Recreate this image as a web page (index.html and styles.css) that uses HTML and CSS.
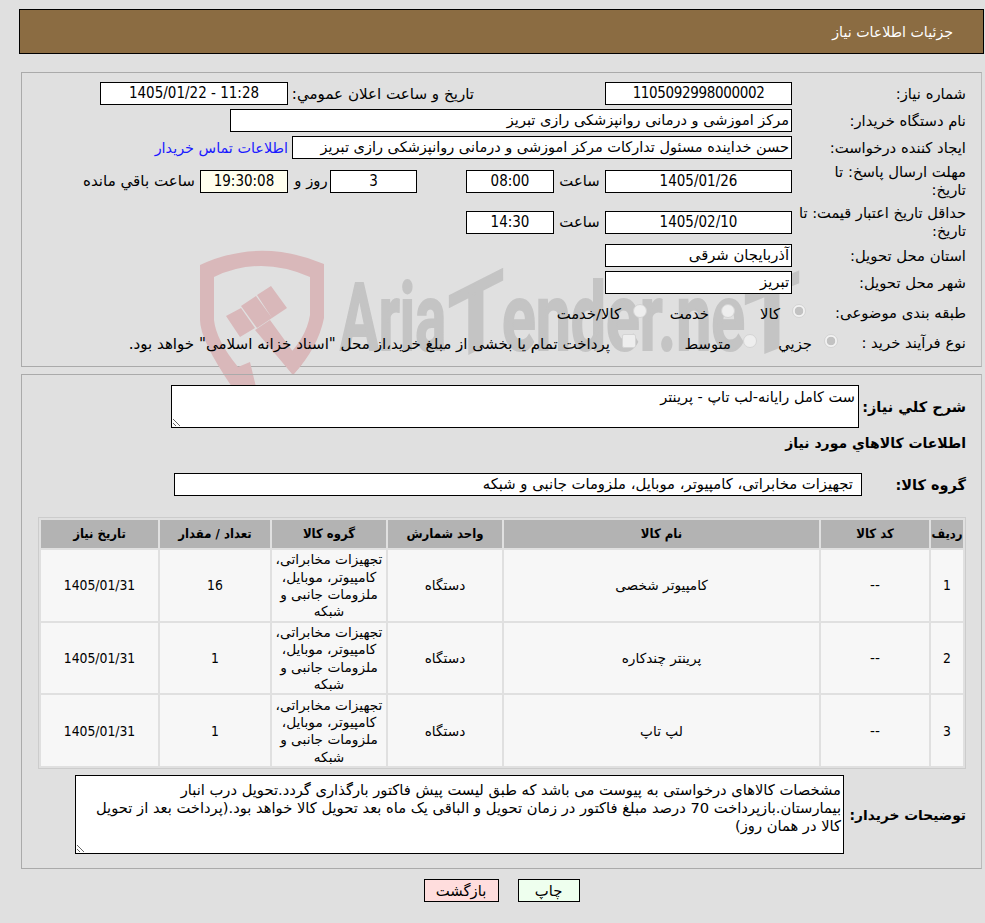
FILE: index.html
```html
<!DOCTYPE html>
<html lang="fa" dir="rtl">
<head>
<meta charset="utf-8">
<title>جزئیات اطلاعات نیاز</title>
<link rel="stylesheet" href="styles.css">
</head>
<body>
<header class="page-title"><h1>جزئیات اطلاعات نیاز</h1></header>

<section class="panel panel-info">
  <svg class="watermark" viewBox="0 0 630 145" aria-hidden="true">
    <path class="wm-shield" d="M10 25 Q70 -3 134 24 L134 78 Q128 108 103 135 L92 121 Q116 100 120 75 L120 37 Q70 15 24 37 L24 80 Q26 100 48 127 L60 122 L66 147 L42 147 Q10 100 10 80 Z"/>
    <path class="wm-shield" d="M36 76 L51 68 L65 88 L50 97 Z M51 66 L66 56 L82 78 L67 88 Z M67 55 L81 46 L97 68 L82 78 Z M65 90 L80 80 L112 124 L103 135 Z"/>
    <text class="wm-text" x="150" y="110" textLength="106" lengthAdjust="spacingAndGlyphs">Aria</text>
    <text class="wm-text wm-t1" x="258" y="110" textLength="56" lengthAdjust="spacingAndGlyphs">T</text>
    <text class="wm-text" x="312" y="110" textLength="243" lengthAdjust="spacingAndGlyphs">ender.ne</text>
    <text class="wm-text wm-t2" x="554" y="110" textLength="56" lengthAdjust="spacingAndGlyphs">T</text>
  </svg>

  <div class="row row-std">
    <label class="lbl">شماره نیاز:</label>
    <div class="fld w-187 center num tight">1105092998000002</div>
    <span class="txt wide pub">تاریخ و ساعت اعلان عمومي:</span>
    <div class="fld w-188 center num ltr ms-5">1405/01/22 - 11:28</div>
  </div>
  <div class="row row-std">
    <label class="lbl">نام دستگاه خریدار:</label>
    <div class="fld w-562">مرکز اموزشی و درمانی روانپزشکی رازی تبریز</div>
  </div>
  <div class="row row-std">
    <label class="lbl">ایجاد کننده درخواست:</label>
    <div class="fld w-500">حسن خداینده مسئول تدارکات مرکز اموزشی و درمانی روانپزشکی رازی تبریز</div>
    <a class="contact" href="#">اطلاعات تماس خریدار</a>
  </div>
  <div class="row row-tall">
    <label class="lbl">مهلت ارسال پاسخ: تا تاریخ:</label>
    <div class="fld w-187 center num">1405/01/26</div>
    <span class="txt hour">ساعت</span>
    <div class="fld w-88 center num">08:00</div>
    <div class="fld w-87 center num ms-49">3</div>
    <span class="txt day">روز و</span>
    <div class="fld w-88 center num timer">19:30:08</div>
    <span class="txt wide ms-5">ساعت باقي مانده</span>
  </div>
  <div class="row row-tall">
    <label class="lbl lbl-long">حداقل تاریخ اعتبار قیمت: تا تاریخ:</label>
    <div class="fld w-187 center num">1405/02/10</div>
    <span class="txt hour">ساعت</span>
    <div class="fld w-88 center num">14:30</div>
  </div>
  <div class="row row-std">
    <label class="lbl">استان محل تحویل:</label>
    <div class="fld w-187 fld-wide">آذربایجان شرقی</div>
  </div>
  <div class="row row-std">
    <label class="lbl">شهر محل تحویل:</label>
    <div class="fld w-187 fld-wide">تبریز</div>
  </div>
  <div class="row row-radio">
    <label class="lbl lbl-cat">طبقه بندی موضوعی:</label>
    <input class="radio" type="radio" name="cat" checked disabled>
    <span class="txt opt opt-45">کالا</span>
    <input class="radio" type="radio" name="cat" disabled>
    <span class="txt opt opt-63">خدمت</span>
    <input class="radio" type="radio" name="cat" disabled>
    <span class="txt opt">کالا/خدمت</span>
  </div>
  <div class="row row-radio">
    <label class="lbl lbl-type">نوع فرآیند خرید :</label>
    <input class="radio" type="radio" name="type" checked disabled>
    <span class="txt opt opt-55">جزیي</span>
    <input class="radio" type="radio" name="type" disabled>
    <span class="txt opt opt-96">متوسط</span>
    <input class="check" type="checkbox" disabled>
    <span class="txt opt wide">پرداخت تمام یا بخشی از مبلغ خرید،از محل "اسناد خزانه اسلامی" خواهد بود.</span>
  </div>
</section>

<section class="panel panel-goods">
  <div class="row row-desc">
    <label class="lbl-b">شرح كلي نیاز:</label>
    <textarea class="area area-desc" readonly>ست کامل رایانه-لب تاپ - پرینتر</textarea>
  </div>
  <h2 class="goods-title">اطلاعات كالاهاي مورد نیاز</h2>
  <div class="row row-group">
    <label class="lbl-b lbl-group">گروه کالا:</label>
    <div class="fld w-688 pad fld-wide">تجهیزات مخابراتی، کامپیوتر، موبایل، ملزومات جانبی و شبکه</div>
  </div>
  <table class="goods">
    <colgroup>
      <col class="c1"><col class="c2"><col class="c3"><col class="c4"><col class="c5"><col class="c6"><col class="c7">
    </colgroup>
    <thead>
      <tr><th>ردیف</th><th>کد کالا</th><th>نام کالا</th><th>واحد شمارش</th><th>گروه کالا</th><th>تعداد / مقدار</th><th>تاریخ نیاز</th></tr>
    </thead>
    <tbody>
      <tr><td class="n">1</td><td>--</td><td>کامپیوتر شخصی</td><td>دستگاه</td><td>تجهیزات مخابراتی، کامپیوتر، موبایل، ملزومات جانبی و شبکه</td><td class="n">16</td><td class="n">1405/01/31</td></tr>
      <tr><td class="n">2</td><td>--</td><td>پرینتر چندکاره</td><td>دستگاه</td><td>تجهیزات مخابراتی، کامپیوتر، موبایل، ملزومات جانبی و شبکه</td><td class="n">1</td><td class="n">1405/01/31</td></tr>
      <tr><td class="n">3</td><td>--</td><td>لپ تاپ</td><td>دستگاه</td><td>تجهیزات مخابراتی، کامپیوتر، موبایل، ملزومات جانبی و شبکه</td><td class="n">1</td><td class="n">1405/01/31</td></tr>
    </tbody>
  </table>
  <div class="row row-notes">
    <label class="lbl-b">توضیحات خریدار:</label>
    <textarea class="area area-notes" readonly>مشخصات کالاهای درخواستی به پیوست می باشد که طبق لیست پیش فاکتور بارگذاری گردد.تحویل درب انبار بیمارستان.بازپرداخت 70 درصد مبلغ فاکتور در زمان تحویل و الباقی یک ماه بعد تحویل کالا خواهد بود.(پرداخت بعد از تحویل کالا در همان روز)</textarea>
  </div>
</section>

<div class="actions">
  <button class="btn btn-print" type="button">چاپ</button>
  <button class="btn btn-back" type="button">بازگشت</button>
</div>
</body>
</html>
```
FILE: styles.css
```css
* { box-sizing: border-box; }
html, body { margin: 0; padding: 0; }
body {
  background: #e0e0e0;
  color: #000;
  font-family: "DejaVu Sans", sans-serif;
  font-size: 14.8px;
  line-height: 18px;
  padding: 9px 1px 0 21px;
  height: 923px;
  overflow: hidden;
}
.page-title {
  margin-left: -2px;
  height: 45px;
  background: #8b6c42;
  border: 1px solid #000;
  display: flex;
  align-items: center;
  padding-right: 30px;
}
.page-title h1 { margin: 0; font-size: 14.2px; font-weight: normal; color: #fff; }

.panel { border: 1px solid #aaa; border-right-color: #bbb; margin-right: 2px; position: relative; }
.panel-info { margin-top: 18px; height: 295px; padding: 9px 15px 0 0; display: flex; flex-direction: column; gap: 4px; }
.panel-goods { margin-top: 7px; height: 495px; padding: 10px 15px 0 0; }

.watermark { position: absolute; left: 168px; top: 167px; width: 630px; height: 145px; overflow: visible; }
.wm-shield { fill: #d9b8ba; }
.wm-text { fill: #c4c4c4; stroke: #c4c4c4; stroke-width: 2px; font-family: "Roboto", sans-serif; font-weight: 700; font-size: 95px; direction: ltr; unicode-bidi: bidi-override; }
.wm-t1 { transform: skewY(-27deg); transform-origin: 286px 60px; transform-box: view-box; }
.wm-t2 { transform: skewY(-22deg); transform-origin: 582px 60px; transform-box: view-box; }

.row { display: flex; align-items: center; position: relative; }
.row-std { height: 23px; }
.row-tall { height: 36px; }
.row-tall + .row-tall { margin-top: 1px; }
.row-radio { height: 26px; }
.row-std + .row-radio { margin-top: 2px; }

.lbl { width: 174px; padding-left: 8px; flex: none; }
.lbl-long { padding-left: 1px; font-size: 14.6px; }
.lbl-cat { width: 160px; padding-left: 0; }
.lbl-type { width: 128px; padding-left: 0; }
.lbl-b { font-weight: bold; font-size: 14.5px; flex: none; white-space: nowrap; }

.fld {
  height: 23px;
  border: 1px solid #000;
  background: #fff;
  padding: 1px 2px 0 0;
  font-size: 14.5px;
  white-space: nowrap;
  overflow: hidden;
  flex: none;
}
.fld-wide { font-size: 14.8px; }
.center { text-align: center; padding-right: 0; }
.num { font-family: "DejaVu Sans Condensed", "DejaVu Sans", sans-serif; font-size: 15px; }
.tight { letter-spacing: -0.35px; }
.ltr { direction: ltr; }
.pad { padding-right: 8px; }
.timer { background: #ffffee; }
.w-87 { width: 87px; }
.w-88 { width: 88px; }
.w-187 { width: 187px; }
.w-188 { width: 188px; }
.w-500 { width: 500px; }
.w-562 { width: 562px; }
.w-688 { width: 688px; }

.txt { flex: none; white-space: nowrap; }
.wide { font-size: 15.1px; }
.pub { width: 312px; padding-right: 131px; }
.ms-5 { margin-right: 5px; }
.ms-49 { margin-right: 49px; }
.hour { width: 51px; text-align: center; }
.day { width: 42px; text-align: center; padding-left: 4px; }
.contact { color: #1a1aff; font-size: 14.4px; text-decoration: none; margin-right: 4px; white-space: nowrap; }

.radio, .check {
  appearance: none;
  -webkit-appearance: none;
  flex: none;
  margin: 0;
  width: 14px;
  height: 14px;
  border-radius: 50%;
  border: 1px solid #d4d4d4;
  background: #eeeeee;
  position: relative;
  top: -2px;
}
.radio:checked { background: radial-gradient(circle, #c2c2c2 0 4px, #f2f2f2 4.6px); }
.check { border-radius: 2px; }
.opt { padding-right: 12px; padding-top: 1px; }
.opt-45 { width: 57px; }
.opt-63 { width: 74px; }
.opt-55 { width: 67px; }
.opt-96 { width: 107px; }

.row-desc { height: 43px; }
.row-desc .lbl-b { width: 107px; }
.area {
  display: block;
  border: 1px solid #000;
  background: #fff;
  font: inherit;
  font-size: 14.5px;
  color: #000;
  margin: 0;
  padding: 2px 3px;
  outline: none;
  flex: none;
}
.area-desc { width: 688px; height: 43px; resize: both; }
.goods-title { margin: 6px 0 0; height: 39px; font-size: 14px; font-weight: bold; line-height: 18px; }
.row-group { height: 23px; }
.lbl-group { width: 104px; }
.goods {
  margin: 21px 0 0;
  width: 928px;
  table-layout: fixed;
  border: 1px solid #ccc;
  border-collapse: separate;
  border-spacing: 2px;
  font-size: 13.7px;
  line-height: 17.3px;
}
.c1 { width: 32px; } .c2 { width: 108px; } .c3 { width: 315px; } .c4 { width: 114px; }
.c5 { width: 114px; } .c6 { width: 110px; } .c7 { width: 117px; }
.goods th { height: 28px; background: #b3b3b3; font-family: "DejaVu Sans Condensed", "DejaVu Sans", sans-serif; font-size: 13px; font-weight: bold; padding: 0; }
.goods td { height: 70.7px; background: #f7f7f7; text-align: center; padding: 1px 2px 0; }
.goods td.n { font-family: "DejaVu Sans Condensed", "DejaVu Sans", sans-serif; font-size: 13.8px; }
.row-notes { height: 79px; margin-top: 6px; }
.row-notes .lbl-b { width: 122px; font-size: 13.8px; }
.area-notes { width: 769px; height: 79px; resize: both; font-size: 14.7px; padding: 5px 2px 2px; }

.actions { display: flex; justify-content: center; gap: 19px; margin-top: 10px; margin-right: 2px; }
.btn {
  height: 23px;
  border: 1px solid #000;
  font: inherit;
  color: #000;
  padding: 0;
}
.btn-print { width: 62px; background: #eeffee; }
.btn-back { width: 75px; background: #ffdddd; }
```
